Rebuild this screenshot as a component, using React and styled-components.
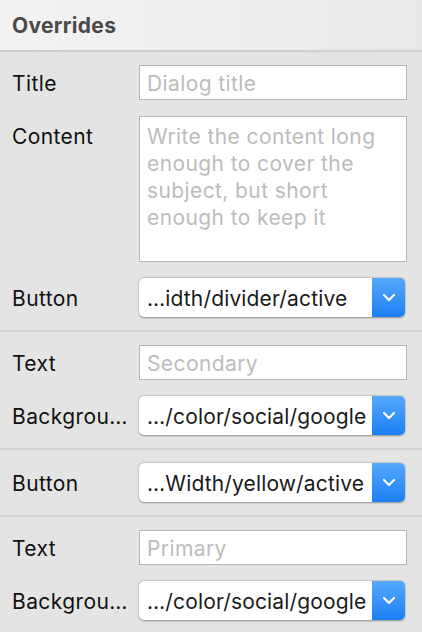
import styled, { createGlobalStyle } from 'styled-components';

const GlobalStyle = createGlobalStyle`
  html, body {
    margin: 0;
    padding: 0;
    background: #e4e4e4;
    font-family: Inter, "Liberation Sans", Arial, sans-serif;
  }
  * {
    box-sizing: border-box;
  }
`;

const sections = [
  [
    { label: 'Title', kind: 'input', placeholder: 'Dialog title' },
    { label: 'Content', kind: 'area', placeholder: 'Write the content long enough to cover the subject, but short enough to keep it' },
    { label: 'Button', kind: 'select', value: '…idth/divider/active' },
  ],
  [
    { label: 'Text', kind: 'input', placeholder: 'Secondary' },
    { label: 'Backgrou…', kind: 'select', value: '…/color/social/google' },
  ],
  [
    { label: 'Button', kind: 'select', value: '…Width/yellow/active' },
  ],
  [
    { label: 'Text', kind: 'input', placeholder: 'Primary' },
    { label: 'Backgrou…', kind: 'select', value: '…/color/social/google' },
  ],
];

const Chevron = () => (
  <svg width="14" height="9" viewBox="0 0 14 9">
    <path d="M2 2l5 5 5-5" fill="none" stroke="#fff" strokeWidth="2.2" strokeLinecap="round" strokeLinejoin="round" />
  </svg>
);

const Field = ({ item }) => {
  if (item.kind === 'input') return <TextInput placeholder={item.placeholder} readOnly />;
  if (item.kind === 'area') return <TextArea placeholder={item.placeholder} readOnly />;
  return (
    <Select>
      <SelectValue>{item.value}</SelectValue>
      <SelectArrow>
        <Chevron />
      </SelectArrow>
    </Select>
  );
};

const App = () => {
  return (
    <Panel>
      <GlobalStyle />
      <Header>Overrides</Header>
      {sections.map((rows, i) => (
        <Section key={i} last={i === sections.length - 1}>
          {rows.map((item, j) => (
            <Row key={j}>
              <Label top={item.kind === 'area'}>{item.label}</Label>
              <Field item={item} />
            </Row>
          ))}
        </Section>
      ))}
    </Panel>
  );
};

export default App;

const Panel = styled.div`
  width: 422px;
  height: 632px;
  overflow: hidden;
  background: #e4e4e4;
`;

const Header = styled.div`
  height: 52px;
  padding: 0 12px;
  display: flex;
  align-items: center;
  font-size: 21px;
  font-weight: 700;
  letter-spacing: 0.3px;
  color: #4a4a4a;
  background: linear-gradient(to right, #f3f3f3, #e9e9e9);
  border-bottom: 2px solid #cfcfcf;
`;

const Section = styled.div`
  display: flex;
  flex-direction: column;
  gap: 16px;
  padding: 13px 15px 13px 12px;
  border-bottom: ${({ last }) => (last ? 'none' : '2px solid #d2d2d2')};
`;

const Row = styled.div`
  display: grid;
  grid-template-columns: 127px 1fr;
  align-items: center;
`;

const Label = styled.div`
  align-self: ${({ top }) => (top ? 'start' : 'center')};
  padding-top: ${({ top }) => (top ? '8px' : '2px')};
  font-size: 21px;
  letter-spacing: 0.4px;
  color: #111;
  white-space: nowrap;
  overflow: hidden;
`;

const TextInput = styled.input`
  height: 35px;
  width: 100%;
  margin: 0;
  padding: 2px 7px 0;
  border: 1px solid #b5b5b5;
  border-radius: 0;
  background: #fff;
  font-family: inherit;
  font-size: 21px;
  letter-spacing: 0.4px;
  outline: none;
  &::placeholder {
    color: #bcbcbc;
  }
`;

const TextArea = styled.textarea`
  height: 146px;
  width: 100%;
  margin: 0;
  padding: 6px 7px;
  border: 1px solid #b5b5b5;
  border-radius: 0;
  background: #fff;
  font-family: inherit;
  font-size: 21px;
  letter-spacing: 0.4px;
  line-height: 27px;
  resize: none;
  outline: none;
  overflow: hidden;
  &::placeholder {
    color: #bcbcbc;
  }
`;

const Select = styled.div`
  height: 39px;
  width: 266px;
  display: flex;
  align-items: stretch;
  border-radius: 5px;
  background: #fff;
  box-shadow: 0 0.5px 2px rgba(0, 0, 0, 0.35), 0 0 0 0.5px rgba(0, 0, 0, 0.08);
  overflow: hidden;
`;

const SelectValue = styled.div`
  flex: 1;
  display: flex;
  align-items: center;
  padding: 2px 0 0 8px;
  font-size: 21px;
  letter-spacing: 0.15px;
  color: #1a1a1a;
  white-space: nowrap;
  overflow: hidden;
`;

const SelectArrow = styled.div`
  width: 33px;
  display: flex;
  align-items: center;
  justify-content: center;
  background: linear-gradient(to bottom, #55a9fb, #1b7ff5);
`;
